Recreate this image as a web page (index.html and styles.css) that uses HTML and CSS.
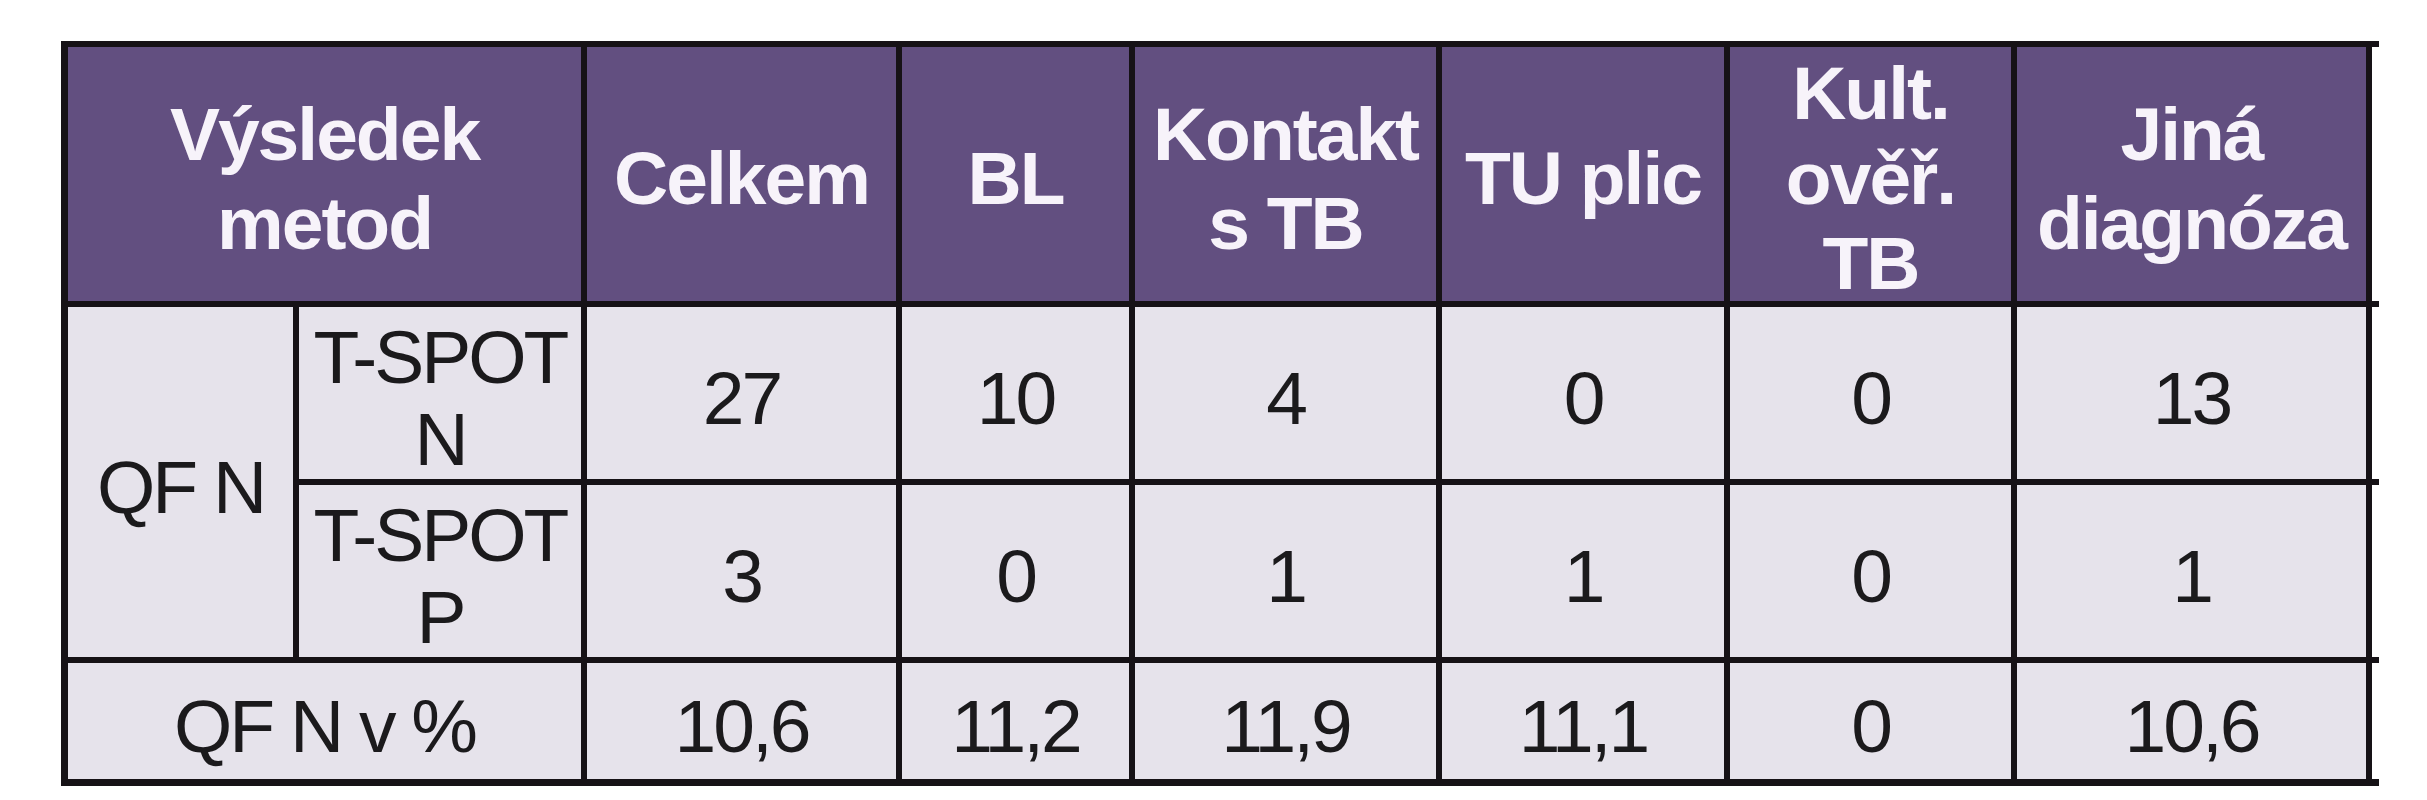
FILE: index.html
```html
<!DOCTYPE html>
<html lang="cs">
<head>
<meta charset="utf-8">
<title>Výsledek metod</title>
<link rel="stylesheet" href="styles.css">
</head>
<body>
<div class="table">
  <div class="cell head span2">Výsledek<br>metod</div>
  <div class="cell head">Celkem</div>
  <div class="cell head">BL</div>
  <div class="cell head">Kontakt<br>s TB</div>
  <div class="cell head">TU plic</div>
  <div class="cell head tight">Kult.<br>ověř.<br>TB</div>
  <div class="cell head">Jiná<br>diagnóza</div>
  <div class="fill"></div>

  <div class="cell body rowspan2">QF N</div>
  <div class="cell body">T-SPOT<br>N</div>
  <div class="cell body">27</div>
  <div class="cell body">10</div>
  <div class="cell body">4</div>
  <div class="cell body">0</div>
  <div class="cell body">0</div>
  <div class="cell body">13</div>
  <div class="fill"></div>

  <div class="cell body">T-SPOT<br>P</div>
  <div class="cell body">3</div>
  <div class="cell body">0</div>
  <div class="cell body">1</div>
  <div class="cell body">1</div>
  <div class="cell body">0</div>
  <div class="cell body">1</div>
  <div class="fill"></div>

  <div class="cell body span2">QF N v %</div>
  <div class="cell body">10,6</div>
  <div class="cell body">11,2</div>
  <div class="cell body">11,9</div>
  <div class="cell body">11,1</div>
  <div class="cell body">0</div>
  <div class="cell body">10,6</div>
  <div class="fill"></div>
</div>
</body>
</html>
```

FILE: styles.css
```css
html, body {
  margin: 0;
  background: #ffffff;
}

body {
  padding: 41px 0 0 61px;
  font-family: "Liberation Sans", Arial, sans-serif;
}

.table {
  display: inline-grid;
  grid-template-columns: 225px 282px 309px 227px 301px 282px 281px 349px 7px;
  grid-template-rows: 254px 172px 172px 116px;
  column-gap: 6px;
  row-gap: 6px;
  padding: 6px 0 7px 7px;
  background: #161216;
}

.cell {
  display: flex;
  align-items: center;
  justify-content: center;
  text-align: center;
  padding-top: 9px;
  box-sizing: border-box;
  overflow: visible;
}

.head {
  background: #624f80;
  color: #f7f3fa;
  font-weight: bold;
  font-size: 75px;
  line-height: 89px;
  letter-spacing: -2px;
}

.head.tight {
  line-height: 85px;
}

.body {
  background: #e6e3eb;
  color: #1b1a1c;
  font-size: 75px;
  line-height: 82px;
  letter-spacing: -3px;
}

.span2 {
  grid-column: span 2;
}

.rowspan2 {
  grid-row: span 2;
}

.fill {
  background: #ffffff;
}
```
